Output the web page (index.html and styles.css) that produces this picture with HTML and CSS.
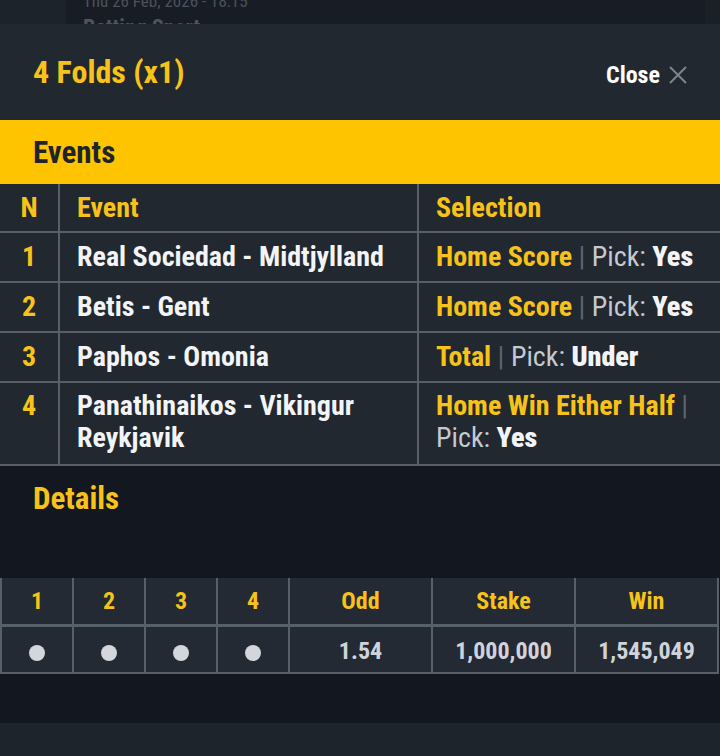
FILE: index.html
```html
<!DOCTYPE html>
<html lang="en">
<head>
  <meta charset="UTF-8">
  <meta name="viewport" content="width=device-width, initial-scale=1.0">
  <title>4 Folds</title>
  <link rel="stylesheet" href="styles.css">
</head>
<body>

<!-- page behind the sheet -->
<div class="backdrop">
  <div class="side"></div>
  <div class="card">
    <div class="card-date">Thu 26 Feb, 2026 - 18:15</div>
    <div class="card-title">Betting Sport</div>
  </div>
</div>

<div class="sheet">
  <div class="sheet-head">
    <h1>4 Folds (x1)</h1>
    <button class="close">Close
      <svg class="close-x" width="20" height="20" viewBox="0 0 20 20">
        <path d="M2 2 L18 18 M18 2 L2 18" stroke="#7d848c" stroke-width="2" fill="none"/>
      </svg>
    </button>
  </div>

  <div class="band">Events</div>

  <table class="events">
    <colgroup>
      <col class="w-n">
      <col class="w-event">
      <col>
    </colgroup>
    <thead>
      <tr>
        <th class="col-n">N</th>
        <th>Event</th>
        <th>Selection</th>
      </tr>
    </thead>
    <tbody>
      <tr>
        <td class="col-n">1</td>
        <td>Real Sociedad - Midtjylland</td>
        <td><span class="market">Home Score</span> <span class="sep">|</span> <span class="pick">Pick:</span> <b>Yes</b></td>
      </tr>
      <tr>
        <td class="col-n">2</td>
        <td>Betis - Gent</td>
        <td><span class="market">Home Score</span> <span class="sep">|</span> <span class="pick">Pick:</span> <b>Yes</b></td>
      </tr>
      <tr>
        <td class="col-n">3</td>
        <td>Paphos - Omonia</td>
        <td><span class="market">Total</span> <span class="sep">|</span> <span class="pick">Pick:</span> <b>Under</b></td>
      </tr>
      <tr class="tall">
        <td class="col-n">4</td>
        <td>Panathinaikos - Vikingur Reykjavik</td>
        <td><span class="market">Home Win Either Half</span> <span class="sep">|</span> <span class="pick">Pick:</span> <b>Yes</b></td>
      </tr>
    </tbody>
  </table>

  <div class="details">
    <h2>Details</h2>
    <table class="combo">
      <thead>
        <tr>
          <th class="narrow">1</th>
          <th class="narrow">2</th>
          <th class="narrow">3</th>
          <th class="narrow">4</th>
          <th>Odd</th>
          <th>Stake</th>
          <th>Win</th>
        </tr>
      </thead>
      <tbody>
        <tr>
          <td><span class="dot"></span></td>
          <td><span class="dot"></span></td>
          <td><span class="dot"></span></td>
          <td><span class="dot"></span></td>
          <td>1.54</td>
          <td>1,000,000</td>
          <td>1,545,049</td>
        </tr>
      </tbody>
    </table>
  </div>

  <div class="footer"></div>
</div>

</body>
</html>
```

FILE: styles.css
```css
body {
  margin: 0;
  width: 720px;
  height: 756px;
  overflow: hidden;
  background-color: #131820;
  font-family: 'Roboto', 'Liberation Sans', sans-serif;
  font-stretch: 82%;
  color: #f2f4f7;
}

/* Underlying page */
.backdrop {
  display: flex;
  height: 24px;
  overflow: hidden;
  background-color: #1b2027;
}

.side {
  width: 66px;
  background-color: #1d232a;
  border-right: 1px solid #171c22;
}

.card {
  flex: 1;
  margin-right: 15px;
  background-color: #181d25;
  padding-left: 16px;
}

.card-date {
  margin-top: -9px;
  font-size: 17px;
  line-height: 20px;
  color: #4b525b;
}

.card-title {
  margin-top: 4px;
  font-size: 22px;
  font-weight: 700;
  color: #4d545c;
}

/* Sheet */
.sheet {
  background-color: #22282f;
}

.sheet-head {
  height: 96px;
  display: flex;
  align-items: center;
  justify-content: space-between;
  padding: 0 32px 0 33px;
}

h1 {
  margin: 0;
  font-size: 32px;
  font-weight: 700;
  color: #f7c21a;
}

.close {
  display: flex;
  align-items: center;
  gap: 8px;
  margin-top: 6px;
  background: none;
  border: none;
  padding: 0;
  font-family: inherit;
  font-stretch: 82%;
  font-size: 24px;
  font-weight: 700;
  color: #ffffff;
}

.band {
  height: 64px;
  display: flex;
  align-items: center;
  padding-left: 33px;
  background-color: #ffc400;
  color: #1f242b;
  font-size: 31px;
  font-weight: 700;
}

/* Events table */
.events {
  width: 720px;
  border-collapse: collapse;
  table-layout: fixed;
  font-size: 28px;
  font-weight: 700;
}

.w-n {
  width: 59px;
}

.w-event {
  width: 359px;
}

.events th,
.events td {
  border: 2px solid #56606b;
  text-align: left;
  padding: 0 8px 0 17px;
  line-height: 32px;
  height: 48px;
}

.events tr > :first-child {
  border-left: none;
}

.events tr > :last-child {
  border-right: none;
}

.events thead th {
  border-top: none;
  color: #f7c21a;
  height: 47px;
}

.events .col-n {
  padding: 0;
  text-align: center;
  color: #f7c21a;
}

.events .tall td {
  height: 74px;
  vertical-align: top;
  padding-top: 7px;
}

.market {
  color: #f7c21a;
}

.sep {
  color: #5d6570;
  font-weight: 400;
}

.pick {
  color: #c5cad1;
  font-weight: 400;
}

/* Details */
.details {
  box-sizing: border-box;
  height: 257px;
  padding-top: 14px;
  background-color: #131820;
}

h2 {
  margin: 0 0 0 33px;
  font-size: 31px;
  font-weight: 700;
  color: #f7c21a;
}

.combo {
  margin-top: 61px;
  width: 719px;
  border-collapse: collapse;
  table-layout: fixed;
  font-size: 24px;
  font-weight: 700;
  text-align: center;
}

.combo th,
.combo td {
  border: 2px solid #56606b;
  background-color: #232a33;
  padding: 0;
}

.combo thead th {
  border-top: none;
  border-bottom-width: 3px;
  height: 46px;
  color: #f7c21a;
}

.combo .narrow {
  width: 70px;
}

.combo td {
  height: 42px;
  padding-top: 3px;
  color: #d0d4da;
}

.dot {
  display: inline-block;
  width: 16px;
  height: 16px;
  border-radius: 50%;
  background-color: #d3d6da;
  vertical-align: middle;
}

.footer {
  height: 34px;
  background-color: #1e242b;
}
```
